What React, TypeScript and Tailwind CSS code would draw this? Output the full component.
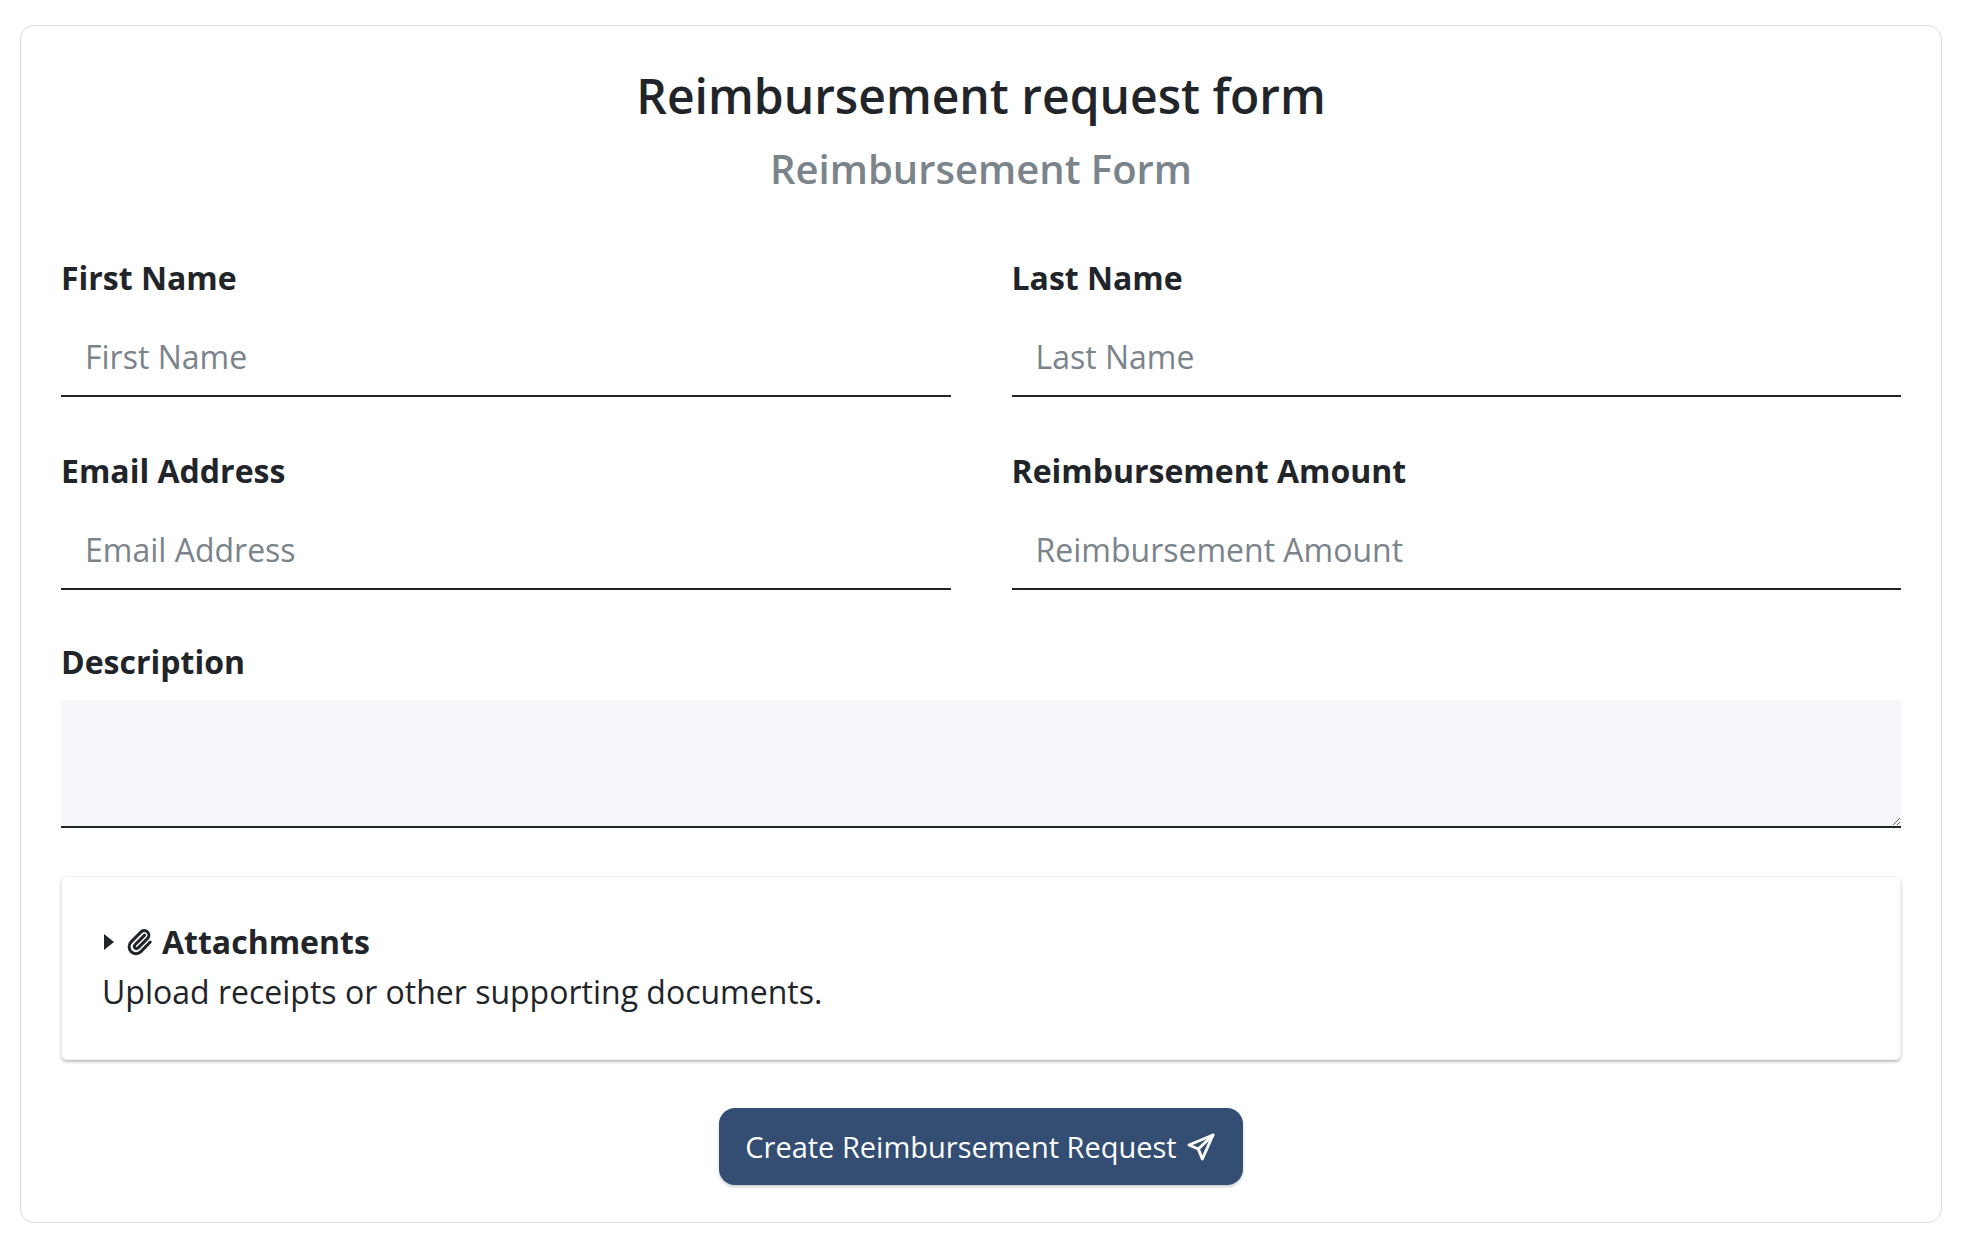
import React from "react";

const F = { fontFamily: '"Open Sans", "Noto Sans", sans-serif' };

function Field({ label, ph }: { label: string; ph: string }) {
  return (
    <div className="flex flex-col">
      <label className="text-[32px] font-bold text-[#212529] leading-[44px]">{label}</label>
      <input
        placeholder={ph}
        className="mt-[35px] h-[44px] px-[24px] text-[32px] text-[#212529] placeholder:text-[#7b838b] border-b-[2px] border-[#212529] outline-none bg-transparent pb-[16px] box-content"
        style={F}
      />
    </div>
  );
}

export default function App() {
  return (
    <div className="bg-white min-h-[1236px] pt-[25px] px-[20px]" style={F}>
      <div className="border border-[#dcdcdc] rounded-[14px] px-[40px] pt-[38px] pb-[40px] h-[1198px]">
        <h1 className="text-center text-[48px] font-semibold text-[#212529] leading-[64px]">Reimbursement request form</h1>
        <h2 className="text-center text-[40px] font-semibold text-[#7b838b] leading-[54px] mt-[14px]">Reimbursement Form</h2>
        <div className="grid grid-cols-2 gap-x-[61px] mt-[60px] gap-y-[52px]">
          <Field label="First Name" ph="First Name" />
          <Field label="Last Name" ph="Last Name" />
          <Field label="Email Address" ph="Email Address" />
          <Field label="Reimbursement Amount" ph="Reimbursement Amount" />
        </div>
        <div className="mt-[50px]">
          <label className="text-[32px] font-bold text-[#212529] leading-[44px] block">Description</label>
          <textarea className="mt-[16px] w-full h-[128px] bg-[#f5f7fb] border-b-[2px] border-[#212529] block outline-none" />
        </div>
        <div className="mt-[48px] rounded-[6px] shadow-[0_2px_3px_rgba(0,0,0,0.25)] border border-[#f1f1f1] px-[40px] pt-[42px] pb-[44px]">
          <div className="flex items-center gap-[8px] text-[32px] font-bold text-[#212529] leading-[46px]">
            <svg width="14" height="20" viewBox="0 0 14 20"><path d="M2 2 L12 10 L2 18 Z" fill="#212529" /></svg>
            <svg width="30" height="32" viewBox="0 0 24 24" fill="none" stroke="#212529" strokeWidth="2.4" strokeLinecap="round" strokeLinejoin="round"><path d="M16.5 6.5 8.6 14.4a1.8 1.8 0 0 0 2.5 2.5l8-8a3.7 3.7 0 0 0-5.2-5.2l-8.2 8.2a5.5 5.5 0 0 0 7.8 7.8L21 12" /></svg>
            <span>Attachments</span>
          </div>
          <p className="text-[32px] text-[#212529] leading-[46px] mt-[4px]">Upload receipts or other supporting documents.</p>
        </div>
        <div className="flex justify-center mt-[48px]">
          <button className="h-[77px] px-[26px] rounded-[16px] bg-[#334e72] text-white text-[29px] flex items-center gap-[8px] shadow-[0_2px_3px_rgba(0,0,0,0.2)]" style={F}>
            Create Reimbursement Request
            <svg width="32" height="32" viewBox="0 0 24 24" fill="none" stroke="white" strokeWidth="2.2" strokeLinejoin="round" strokeLinecap="round"><path d="M21 3 3 10.5l7 3 3 7.5z" /><path d="M10 13.5 21 3" /></svg>
          </button>
        </div>
      </div>
    </div>
  );
}
